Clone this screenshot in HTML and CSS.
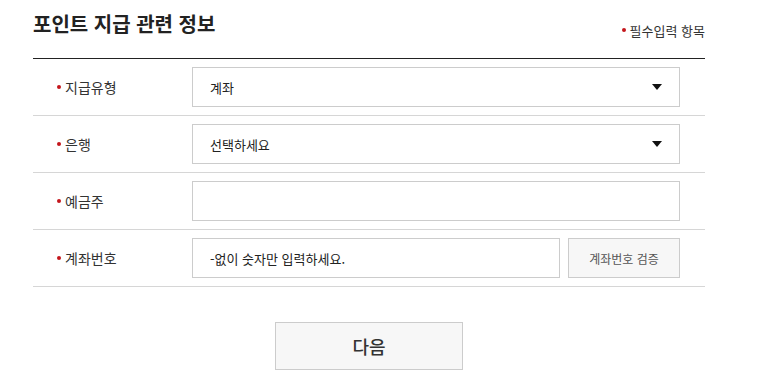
FILE: index.html
```html
<!DOCTYPE html>
<html lang="ko">
<head>
    <meta charset="UTF-8">
    <meta name="viewport" content="width=device-width, initial-scale=1.0">
    <title>포인트 지급 관련 정보</title>
    <link rel="stylesheet" href="styles.css">
</head>
<body>
    <div class="container">
        <div class="header">
            <h2 class="title">포인트 지급 관련 정보</h2>
            <span class="required"><i class="dot"></i>필수입력 항목</span>
        </div>

        <div class="form-table">
            <div class="row">
                <div class="label"><i class="dot"></i>지급유형</div>
                <div class="field">
                    <div class="select">
                        <span>계좌</span>
                        <svg width="10" height="6" viewBox="0 0 10 6"><path d="M0 0H10L5 6Z" fill="#111"/></svg>
                    </div>
                </div>
            </div>
            <div class="row">
                <div class="label"><i class="dot"></i>은행</div>
                <div class="field">
                    <div class="select">
                        <span>선택하세요</span>
                        <svg width="10" height="6" viewBox="0 0 10 6"><path d="M0 0H10L5 6Z" fill="#111"/></svg>
                    </div>
                </div>
            </div>
            <div class="row">
                <div class="label"><i class="dot"></i>예금주</div>
                <div class="field">
                    <input type="text" class="input">
                </div>
            </div>
            <div class="row">
                <div class="label"><i class="dot"></i>계좌번호</div>
                <div class="field">
                    <input type="text" class="input" placeholder="-없이 숫자만 입력하세요.">
                    <button class="btn-check">계좌번호 검증</button>
                </div>
            </div>
        </div>

        <div class="actions">
            <button class="btn-next">다음</button>
        </div>
    </div>
</body>
</html>
```

FILE: styles.css
```css
* {
    margin: 0;
    padding: 0;
    box-sizing: border-box;
    font-family: "Noto Sans CJK KR", "Noto Sans", sans-serif;
}

body {
    background: #fff;
    color: #333;
}

.container {
    width: 672px;
    margin-left: 33px;
}

.header {
    display: flex;
    justify-content: space-between;
    height: 59px;
    border-bottom: 1px solid #222;
}

.title {
    font-size: 20px;
    font-weight: bold;
    color: #222;
    line-height: 26px;
    padding-top: 11px;
}

.required {
    display: flex;
    align-items: center;
    font-size: 13px;
    color: #333;
    height: 18px;
    margin-top: 21px;
}

.dot {
    display: inline-block;
    width: 4px;
    height: 4px;
    border-radius: 50%;
    background: #c4161c;
    margin-right: 4px;
}

.row {
    display: flex;
    align-items: center;
    padding: 8px 0;
    border-bottom: 1px solid #d6d6d6;
}

.label {
    width: 159px;
    padding-left: 24px;
    display: flex;
    align-items: center;
    font-size: 14px;
    color: #333;
}

.field {
    display: flex;
    gap: 8px;
    width: 488px;
}

.select, .input {
    height: 40px;
    border: 1px solid #ccc;
    background: #fff;
    font-size: 13px;
    color: #222;
    padding: 0 17px;
}

.select {
    width: 100%;
    display: flex;
    align-items: center;
    justify-content: space-between;
}

.input {
    flex: 1;
    min-width: 0;
    outline: none;
}

.input::placeholder {
    color: #222;
}

.btn-check {
    width: 112px;
    height: 40px;
    border: 1px solid #ccc;
    background: #f7f7f7;
    color: #555;
    font-size: 12px;
}

.actions {
    display: flex;
    justify-content: center;
    padding-top: 35px;
}

.btn-next {
    width: 188px;
    height: 48px;
    border: 1px solid #ccc;
    background: #f7f7f7;
    color: #333;
    font-size: 18px;
    font-weight: 500;
}
```
